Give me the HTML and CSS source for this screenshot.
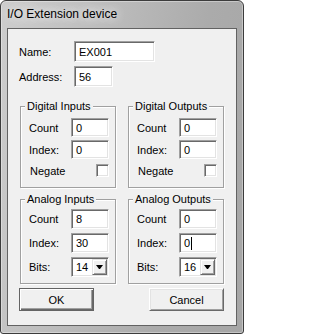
FILE: index.html
```html
<!DOCTYPE html>
<html>
<head>
<meta charset="utf-8">
<link rel="stylesheet" href="styles.css">
</head>
<body>
<div class="window">
  <div class="titlebar">I/O Extension device</div>
  <div class="client">
    <div class="field-row"><span class="lbl-main">Name:</span><div class="input w-name">EX001</div></div>
    <div class="field-row"><span class="lbl-main">Address:</span><div class="input w-addr">56</div></div>
    <div class="groups">
      <div class="group digital">
        <div class="group-title">Digital Inputs</div>
        <div class="rows">
          <div class="row"><span class="lbl">Count</span><div class="input sm">0</div></div>
          <div class="row"><span class="lbl">Index:</span><div class="input sm">0</div></div>
          <div class="row check-row"><span class="lbl lbl-neg">Negate</span><span class="checkbox"></span></div>
        </div>
      </div>
      <div class="group digital">
        <div class="group-title">Digital Outputs</div>
        <div class="rows">
          <div class="row"><span class="lbl">Count</span><div class="input sm">0</div></div>
          <div class="row"><span class="lbl">Index:</span><div class="input sm">0</div></div>
          <div class="row check-row"><span class="lbl lbl-neg">Negate</span><span class="checkbox"></span></div>
        </div>
      </div>
      <div class="group analog">
        <div class="group-title">Analog Inputs</div>
        <div class="rows">
          <div class="row"><span class="lbl">Count</span><div class="input sm">8</div></div>
          <div class="row"><span class="lbl">Index:</span><div class="input sm">30</div></div>
          <div class="row"><span class="lbl">Bits:</span><div class="select"><span class="val">14</span><span class="drop"><span class="arrow"></span></span></div></div>
        </div>
      </div>
      <div class="group analog">
        <div class="group-title">Analog Outputs</div>
        <div class="rows">
          <div class="row"><span class="lbl">Count</span><div class="input sm">0</div></div>
          <div class="row"><span class="lbl">Index:</span><div class="input sm">0<span class="caret"></span></div></div>
          <div class="row"><span class="lbl">Bits:</span><div class="select"><span class="val">16</span><span class="drop"><span class="arrow"></span></span></div></div>
        </div>
      </div>
    </div>
    <div class="buttons">
      <div class="btn btn-default">OK</div>
      <div class="btn">Cancel</div>
    </div>
  </div>
</div>
</body>
</html>
```

FILE: styles.css
```css
html, body {
  margin: 0;
  padding: 0;
  background: #ffffff;
}
body {
  font-family: "Liberation Sans", Arial, sans-serif;
  font-size: 11px;
  color: #000;
}
.window {
  width: 244px;
  height: 334px;
  box-sizing: border-box;
  border: 1px solid #3c3c3c;
  border-radius: 6px 6px 3px 3px;
  background: linear-gradient(100deg, #cdcdcd 0%, #bdbdbd 35%, #ababab 70%, #a6a6a6 100%);
  box-shadow: inset 0 0 0 1px rgba(255,255,255,0.35);
  display: flex;
  flex-direction: column;
  padding: 0 6px 7px 6px;
}
.titlebar {
  height: 27px;
  line-height: 27px;
  font-size: 12px;
  white-space: nowrap;
  text-shadow: 0 0 8px rgba(255,255,255,0.9), 0 0 12px rgba(255,255,255,0.7);
}
.client {
  flex: 1;
  box-sizing: border-box;
  border: 1px solid #626262;
  background: #f0f0f0;
  padding: 12px 12px 0 12px;
  display: flex;
  flex-direction: column;
}
.field-row {
  display: flex;
  align-items: center;
  height: 21px;
}
.field-row + .field-row {
  margin-top: 4px;
}
.lbl-main {
  width: 55px;
  margin-left: -1px;
}
.input, .checkbox, .select {
  box-sizing: border-box;
  background: #fff;
  border: 1px solid;
  border-color: #a0a0a0 #ffffff #ffffff #a0a0a0;
  box-shadow: inset 1px 1px 0 #696969, inset -1px -1px 0 #e3e3e3;
}
.input {
  height: 100%;
  padding-left: 4px;
  display: flex;
  align-items: center;
}
.w-name { width: 81px; }
.w-addr { width: 39px; }
.groups {
  display: grid;
  grid-template-columns: 1fr 1fr;
  column-gap: 12px;
  row-gap: 11px;
  margin-top: 19px;
}
.group {
  border: 1px solid #a0a0a0;
  box-shadow: inset 1px 1px 0 #fff, 1px 1px 0 #fff;
  padding: 0 0 8px 8px;
}
.group-title {
  width: fit-content;
  margin: -7px 0 0 -4px;
  padding: 0 2px;
  line-height: 13px;
  background: #f0f0f0;
  white-space: nowrap;
}
.rows {
  display: flex;
  flex-direction: column;
  gap: 3px;
  margin-top: 5px;
}
.analog {
  padding-bottom: 6px;
}
.analog .rows {
  gap: 4px;
  margin-top: 3px;
}
.row {
  display: flex;
  align-items: center;
  width: 80px;
  height: 19px;
}
.analog .row {
  height: 20px;
}
.check-row {
  height: 17px;
}
.lbl {
  width: 42px;
  flex: none;
}
.lbl-neg {
  padding-left: 1px;
}
.sm {
  width: 38px;
}
.checkbox {
  margin-left: auto;
  width: 13px;
  height: 13px;
}
.caret {
  display: inline-block;
  width: 1px;
  height: 13px;
  background: #000;
  margin-left: 1px;
}
.select {
  width: 38px;
  height: 100%;
  display: flex;
  align-items: stretch;
}
.select .val {
  flex: 1;
  padding-left: 4px;
  display: flex;
  align-items: center;
}
.drop {
  width: 15px;
  margin: 1px 1px 1px 0;
  box-sizing: border-box;
  background: #f0f0f0;
  border: 1px solid;
  border-color: #e3e3e3 #696969 #696969 #e3e3e3;
  box-shadow: inset 1px 1px 0 #fff, inset -1px -1px 0 #a0a0a0;
  display: flex;
  align-items: center;
  justify-content: center;
}
.arrow {
  width: 1px;
  height: 0;
  border-left: 3px solid transparent;
  border-right: 3px solid transparent;
  border-top: 4px solid #000;
}
.buttons {
  display: flex;
  justify-content: space-between;
  margin: 4px 0 0 -1px;
}
.btn {
  width: 75px;
  height: 23px;
  box-sizing: border-box;
  background: #f0f0f0;
  border: 1px solid;
  border-color: #ffffff #696969 #696969 #ffffff;
  box-shadow: inset 1px 1px 0 #e3e3e3, inset -1px -1px 0 #a0a0a0;
  display: flex;
  align-items: center;
  justify-content: center;
}
.btn-default {
  border-color: #646464;
  box-shadow: inset 1px 1px 0 #fff, inset -1px -1px 0 #696969, inset -2px -2px 0 #a0a0a0;
}
```
